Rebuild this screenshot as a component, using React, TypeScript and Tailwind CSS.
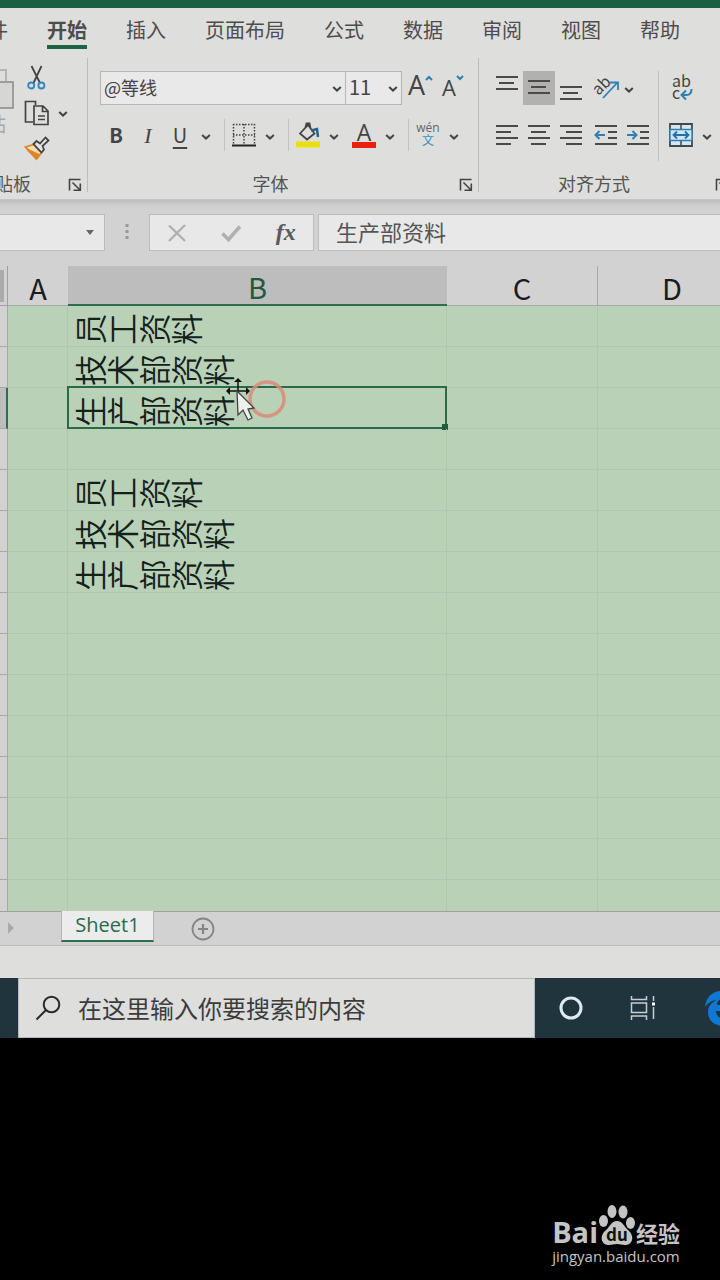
import type { ReactNode } from "react";

const TABS = ["文件", "开始", "插入", "页面布局", "公式", "数据", "审阅", "视图", "帮助"];

// Cell text of column B, one entry per visible row
const ROWS = [
  "员工资料",
  "技术部资料",
  "生产部资料",
  "",
  "员工资料",
  "技术部资料",
  "生产部资料",
  "",
  "",
  "",
  "",
  "",
  "",
  "",
];
const SELECTED_ROW = 2;

function Chevron() {
  return (
    <svg viewBox="0 0 10 8" className="h-2 w-2.5 shrink-0" fill="none" stroke="#444" strokeWidth="2">
      <path d="M1.2 2 5 5.6 8.8 2" />
    </svg>
  );
}

function DropArrow({ label }: { label: string }) {
  return (
    <button aria-label={label} className="flex h-[34px] w-5 shrink-0 items-center justify-center pt-1">
      <Chevron />
    </button>
  );
}

function Tool({ label, active, children }: { label: string; active?: boolean; children: ReactNode }) {
  return (
    <button
      aria-label={label}
      className={`flex h-[34px] w-8 shrink-0 items-center justify-center ${active ? "bg-[#b3b1b0]" : ""}`}
    >
      {children}
    </button>
  );
}

function Divider() {
  return <div className="mr-[3px] ml-2 h-8 w-px shrink-0 bg-[#c2c2c0]" />;
}

function GroupLabel({ children }: { children: ReactNode }) {
  return (
    <div className="mt-auto mb-1 flex h-6 items-center">
      <span className="flex-1 text-center text-[18px] leading-6 text-[#555]">{children}</span>
      <button aria-label={`${children}设置`} className="mx-1.5 mt-1 shrink-0">
        <svg viewBox="0 0 14 14" className="size-3.5" fill="none" stroke="#444" strokeWidth="1.6">
          <path d="M1.500 12.500V1.500H12.500M4.500 4.500l7 7M12.300 5.500v6.800H5.500" />
        </svg>
      </button>
    </div>
  );
}

// Horizontal strokes, each given as [x1, x2, y]
function Lines({ lines, children }: { lines: number[][]; children?: ReactNode }) {
  return (
    <svg viewBox="0 0 24 30" className="h-[30px] w-6" fill="none" stroke="#4a4a4a" strokeWidth="2">
      {lines.map(([a, b, y]) => (
        <path key={y} d={`M${a} ${y}H${b}`} />
      ))}
      {children}
    </svg>
  );
}

function Clipboard() {
  return (
    <section className="flex w-[142px] shrink-0 flex-col">
      <div className="flex">
        <button className="ml-5 flex w-10 shrink-0 flex-col items-end text-[20px] leading-6 text-[#a8a8a6]">
          <svg viewBox="0 0 48 46" className="-mr-2 mt-2.5 h-[46px] w-12" fill="none">
            <path d="M4 4h36v11" stroke="#b4b4b2" strokeWidth="2" />
            <rect x="20" y="16" width="27" height="26" fill="#d6d6d5" stroke="#8e8e8c" strokeWidth="1.6" />
          </svg>
          粘贴
        </button>
        <div className="ml-[15px] flex flex-col pt-1">
          <button aria-label="剪切" className="flex h-[35px] w-8 items-center justify-center">
            <svg viewBox="0 0 20 26" className="h-[26px] w-5" fill="none" strokeWidth="1.8">
              <path d="M4.500 1l8.500 17M14.500 1L6.500 18" stroke="#444" />
              <circle cx="4.200" cy="20.500" r="3" stroke="#2f86c0" />
              <circle cx="14.400" cy="20.500" r="3" stroke="#2f86c0" />
            </svg>
          </button>
          <div className="flex">
            <button aria-label="复制" className="flex h-[35px] w-8 items-center justify-center">
              <svg viewBox="0 0 26 26" className="size-[26px]" fill="none" stroke="#444" strokeWidth="1.7">
                <path d="M9 22H1.500V1.500H11.500V5M10 6h9l5 5V24.500H10zM18.500 6v5.500H24M14 16h7M14 19.500h7" />
              </svg>
            </button>
            <DropArrow label="复制选项" />
          </div>
          <button aria-label="格式刷" className="flex h-[35px] w-8 items-center justify-center">
            <svg viewBox="0 0 26 26" className="size-[26px]" fill="none" strokeWidth="1.8">
              <path d="M1.500 12L9.500 9.500l8 8L12.500 24z" fill="#f6dcb8" stroke="#dd8527" />
              <path d="M3.500 14.500l11 5-2.500 3.500z" fill="#dd8527" stroke="#dd8527" />
              <path d="M9.500 9l3-3 3.500 2.500L21.500 2.500l3 3-6 5.500 1.500 3.500-2.500 3z" stroke="#444" fill="#e4e4e2" />
            </svg>
          </button>
        </div>
      </div>
      <GroupLabel>剪贴板</GroupLabel>
    </section>
  );
}

function FontGroup() {
  return (
    <section className="flex w-[391px] shrink-0 flex-col">
      <div className="mt-[15px] flex pl-3">
        <label className="relative flex">
          <select
            aria-label="字体名称"
            className="h-[34px] w-[246px] appearance-none border border-[#b5b5b5] bg-[#e9e9e9] pb-0.5 pl-[3px] text-[18px] text-[#444]"
          >
            <option>@等线</option>
          </select>
          <span className="pointer-events-none absolute top-3.5 right-1">
            <Chevron />
          </span>
        </label>
        <label className="relative flex">
          <select
            aria-label="字号"
            className="h-[34px] w-14 appearance-none border border-l-0 border-[#b5b5b5] bg-[#e9e9e9] pb-0.5 pl-[3px] text-[20px] text-[#444]"
          >
            <option>11</option>
          </select>
          <span className="pointer-events-none absolute top-3.5 right-1">
            <Chevron />
          </span>
        </label>
        <button aria-label="增大字号" className="ml-1.5 flex h-[34px] w-[34px] items-start text-[#444]">
          <span className="font-['Open_Sans',sans-serif] text-[27px] leading-7">A</span>
          <svg viewBox="0 0 8 6" className="mt-1 h-1.5 w-2" fill="none" stroke="#2f7fb5" strokeWidth="2">
            <path d="M1 5l3-3 3 3" />
          </svg>
        </button>
        <button aria-label="减小字号" className="flex h-[34px] w-8 items-start text-[#444]">
          <span className="pt-0.5 font-['Open_Sans',sans-serif] text-[22px] leading-7">A</span>
          <svg viewBox="0 0 8 6" className="mt-1 h-1.5 w-2" fill="none" stroke="#2f7fb5" strokeWidth="2">
            <path d="M1 1l3 3 3-3" />
          </svg>
        </button>
      </div>
      <div className="mt-[13px] flex items-center pl-3 text-[20px] text-[#444]">
        <Tool label="加粗">
          <span className="font-bold">B</span>
        </Tool>
        <Tool label="倾斜">
          <span className="font-['Liberation_Serif',serif] text-[22px] italic">I</span>
        </Tool>
        <Tool label="下划线">
          <span className="underline underline-offset-4">U</span>
        </Tool>
        <DropArrow label="下划线选项" />
        <Divider />
        <Tool label="边框">
          <svg viewBox="0 0 24 24" className="size-6" fill="none" stroke="#444">
            <path d="M1 1.500H23M1 12H23M1.500 1V22M12 1V22M22.500 1V22" strokeWidth="1.500" strokeDasharray="1.500 1.500" />
            <path d="M0 22.500H24" stroke="#222" strokeWidth="2" />
          </svg>
        </Tool>
        <DropArrow label="边框选项" />
        <Divider />
        <Tool label="填充颜色">
          <svg viewBox="0 0 26 26" className="size-[26px]" fill="none">
            <path d="M5 11.500L13 3l6.500 8.500-7.500 6zM10.500 5.500l1-4h3l1 5" stroke="#444" strokeWidth="1.800" />
            <path d="M16 8.500l6-1.500 1 8" stroke="#24618f" strokeWidth="2.500" />
            <path d="M1 19.500h24v6H1z" fill="#ecdf10" />
          </svg>
        </Tool>
        <DropArrow label="填充颜色选项" />
        <div className="w-1" />
        <Tool label="字体颜色">
          <span className="flex flex-col items-center">
            <span className="font-['Open_Sans',sans-serif] text-[23px] leading-5">A</span>
            <span className="h-1.5 w-6 bg-[#e8200c]" />
          </span>
        </Tool>
        <DropArrow label="字体颜色选项" />
        <Divider />
        <Tool label="拼音指南">
          <span className="flex flex-col items-center pb-0.5">
            <span className="font-['Open_Sans',sans-serif] text-[12px] leading-3 text-[#666]">wén</span>
            <span className="text-[12px] leading-3 text-[#3b8fc4]">文</span>
          </span>
        </Tool>
        <DropArrow label="拼音选项" />
      </div>
      <GroupLabel>字体</GroupLabel>
    </section>
  );
}

function AlignGroup() {
  return (
    <section className="flex w-[256px] shrink-0 flex-col">
      <div className="mt-[15px] flex pl-3">
        <div>
          <div className="flex">
            <Tool label="顶端对齐">
              <Lines lines={[[1, 23, 4], [4, 19, 10], [1, 23, 16]]} />
            </Tool>
            <Tool label="垂直居中" active>
              <Lines lines={[[1, 23, 8], [4, 19, 14], [1, 23, 20]]} />
            </Tool>
            <Tool label="底端对齐">
              <Lines lines={[[1, 23, 14], [4, 19, 20], [1, 23, 26]]} />
            </Tool>
            <div className="w-1" />
            <Tool label="方向">
              <svg viewBox="0 0 26 26" className="size-[26px]" fill="none">
                <text x="0" y="18" fontSize="16" fill="#444" transform="rotate(-45 6 14)">
                  ab
                </text>
                <path d="M9 23L23 8M16 7.500H24V15" stroke="#2f7fb5" strokeWidth="1.800" />
              </svg>
            </Tool>
            <div className="-ml-1">
              <DropArrow label="方向选项" />
            </div>
          </div>
          <div className="mt-[13px] flex">
            <Tool label="左对齐">
              <Lines lines={[[1, 23, 6], [1, 16, 12], [1, 23, 18], [1, 16, 24]]} />
            </Tool>
            <Tool label="居中">
              <Lines lines={[[1, 23, 6], [4, 19, 12], [1, 23, 18], [4, 19, 24]]} />
            </Tool>
            <Tool label="右对齐">
              <Lines lines={[[1, 23, 6], [7, 23, 12], [1, 23, 18], [7, 23, 24]]} />
            </Tool>
            <div className="w-[3px]" />
            <Tool label="减少缩进量">
              <Lines lines={[[1, 23, 6], [14, 23, 12], [14, 23, 18], [1, 23, 24]]}>
                <path d="M11 15H2M5.500 11L1.500 15l4 4" stroke="#2f7fb5" />
              </Lines>
            </Tool>
            <Tool label="增加缩进量">
              <Lines lines={[[1, 23, 6], [14, 23, 12], [14, 23, 18], [1, 23, 24]]}>
                <path d="M1 15H10M6.500 11l4 4-4 4" stroke="#2f7fb5" />
              </Lines>
            </Tool>
          </div>
        </div>
        <div className="mr-1.5 ml-1 h-[90px] w-px bg-[#c2c2c0]" />
        <div>
          <Tool label="自动换行">
            <svg viewBox="0 0 26 28" className="h-7 w-[26px]" fill="none">
              <text x="4" y="13" fontSize="16" fill="#444">
                ab
              </text>
              <text x="4" y="25" fontSize="16" fill="#444">
                c
              </text>
              <path d="M23.500 15c0 4-2 6-5 6h-5M18 16.500L13.500 21l4.500 4.500" stroke="#2f7fb5" strokeWidth="2" />
            </svg>
          </Tool>
          <div className="mt-[13px] flex">
            <Tool label="合并后居中">
              <svg viewBox="0 0 24 24" className="size-6" fill="none">
                <path d="M1 1h22v22H1z" fill="#d8e6ee" stroke="#3f4a50" strokeWidth="1.800" />
                <path d="M1 6.500h22v11H1z" fill="#cfe6f5" stroke="#2f7fb5" strokeWidth="1.400" />
                <path d="M12 1v5M12 18v5" stroke="#3f4a50" strokeWidth="1.500" />
                <path d="M5 12h14M8 8.500L4.500 12 8 15.500M16 8.500l3.500 3.500-3.500 3.500" stroke="#2471a8" strokeWidth="1.800" />
              </svg>
            </Tool>
            <DropArrow label="合并选项" />
          </div>
        </div>
      </div>
      <GroupLabel>对齐方式</GroupLabel>
    </section>
  );
}

function Ribbon() {
  return (
    <div className="-ml-[54px] flex h-36 border-b border-[#c4c4c4]">
      <Clipboard />
      <div className="-ml-px mt-0.5 h-[134px] w-px shrink-0 bg-[#bcbcba]" />
      <FontGroup />
      <div className="-ml-px mt-0.5 h-[134px] w-px shrink-0 bg-[#bcbcba]" />
      <AlignGroup />
    </div>
  );
}

function FormulaBar() {
  return (
    <div className="-ml-[54px] flex h-[66px] items-start bg-linear-to-b from-[#bdbdbd] via-[#d2d2d2] via-10% to-[#d2d2d2] pt-3.5">
      <button
        aria-label="名称框"
        className="flex h-[37px] w-[159px] shrink-0 items-center justify-end border border-[#bcbcbc] bg-[#e8e8e8] pr-2.5"
      >
        <svg viewBox="0 0 8 5" className="h-[5px] w-2" fill="#666">
          <path d="M0 0h8L4 5z" />
        </svg>
      </button>
      <svg viewBox="0 0 4 16" className="mx-5 mt-2.5 h-4 w-1 shrink-0" fill="#999">
        <path d="M.5 0h3v3h-3zM.5 6h3v3h-3zM.5 12h3v3h-3z" />
      </svg>
      <div className="flex h-[37px] w-[165px] shrink-0 items-center justify-around border border-[#bcbcbc] bg-[#e8e8e8]">
        <button aria-label="取消">
          <svg viewBox="0 0 20 20" className="size-5" fill="none" stroke="#b0b0b0" strokeWidth="2.400">
            <path d="M2 2.500l16 15.500M18 2L2 18" />
          </svg>
        </button>
        <button aria-label="输入">
          <svg viewBox="0 0 20 20" className="size-5" fill="none" stroke="#b0b0b0" strokeWidth="3.600">
            <path d="M1.500 10.500l6 6L19 3.500" />
          </svg>
        </button>
        <button className="pb-0.5 font-['Liberation_Serif',serif] text-[24px] leading-6 font-bold text-[#5a5a5a] italic">
          fx
        </button>
      </div>
      <input
        aria-label="编辑栏"
        defaultValue="生产部资料"
        className="ml-1 h-[37px] min-w-0 flex-1 border border-r-0 border-[#bcbcbc] bg-[#e8e8e8] pb-1 pl-[17px] text-[22px] text-[#555]"
      />
    </div>
  );
}

function Pointer() {
  return (
    <svg viewBox="0 0 64 48" className="pointer-events-none absolute top-[72px] left-[224px] z-10 h-12 w-16" fill="none">
      <circle cx="43" cy="21" r="17" stroke="#d98b78" strokeWidth="3.500" opacity=".85" />
      <path d="M14 0l4 4h-8zM2 13l4-4v8zM26 13l-4-4v8z" fill="#111" />
      <path d="M14 3v11M5 13H23" stroke="#111" strokeWidth="1.500" />
      <path d="M13 13l1 24 5-5 5 10 4-2-4-9 6-1z" fill="#edf1ec" stroke="#444" strokeWidth="1.300" />
    </svg>
  );
}

function Sheet() {
  return (
    <div className="relative">
      <table className="w-full table-fixed border-separate border-spacing-0">
        <colgroup>
          <col className="w-2" />
          <col className="w-[60px]" />
          <col className="w-[379px]" />
          <col className="w-[151px]" />
          <col />
        </colgroup>
        <thead>
          <tr className="h-10 bg-[#d2d2d2] text-[29px] leading-8 text-[#1c1c1c]">
            <th aria-label="全选" className="border-r border-b border-[#9f9f9f] p-0">
              <div className="h-8 w-1 bg-[#ababab]" />
            </th>
            <th className="border-b border-[#a8a8a8] p-0 pt-0.5 font-normal">A</th>
            <th className="border-b-2 border-[#2d6e4e] bg-[#bdbdbd] p-0 pt-0.5 font-normal text-[#22593f]">B</th>
            <th className="border-r border-b border-[#a8a8a8] p-0 pt-0.5 font-normal">C</th>
            <th className="border-b border-[#a8a8a8] p-0 pt-0.5 pl-16 text-left font-normal">D</th>
          </tr>
        </thead>
        <tbody>
          {ROWS.map((text, i) => (
            <tr key={i} className="h-[41px]">
              <th
                aria-label={`第${i + 1}行`}
                className={
                  i === SELECTED_ROW
                    ? "border-r-2 border-b border-r-[#2d6e4e] border-b-[#a8a8a8] bg-[#bdbdbd] p-0"
                    : "border-r border-b border-[#a3aca3] bg-[#d2d2d2] p-0"
                }
              />
              <td className="border-r border-b border-[#b3c3b4] p-0" />
              <td className="relative border-r border-b border-[#b3c3b4] p-0 pt-1.5 pl-[7px]">
                {/* glyphs lie on their side while the line still runs left to right */}
                {text && (
                  <span className="block size-8 -rotate-90 text-[32px] leading-8 font-[350] whitespace-nowrap text-[#14201a] [writing-mode:vertical-rl]">
                    {text}
                  </span>
                )}
                {i === SELECTED_ROW && (
                  <span className="absolute -inset-x-px -top-0.5 -bottom-px border-2 border-[#2a6a49]">
                    <span className="absolute -right-[3px] -bottom-[3px] size-1.5 bg-[#1e5d3e]" />
                  </span>
                )}
              </td>
              <td className="border-r border-b border-[#b3c3b4] p-0" />
              <td className="border-b border-[#b3c3b4] p-0" />
            </tr>
          ))}
          <tr className="h-[31px]">
            <th aria-label="第15行" className="border-r border-[#a3aca3] bg-[#d2d2d2] p-0" />
            <td className="border-r border-[#b3c3b4] p-0" />
            <td className="border-r border-[#b3c3b4] p-0" />
            <td className="border-r border-[#b3c3b4] p-0" />
            <td className="p-0" />
          </tr>
        </tbody>
      </table>
      <div className="absolute inset-x-0 top-10">
        <Pointer />
      </div>
    </div>
  );
}

function SheetTabs() {
  return (
    <div className="flex h-[35px] items-start border-t border-b border-t-[#a0a0a0] border-b-[#bcbcbc] bg-[#d2d2d2]">
      <svg viewBox="0 0 6 12" className="mt-2.5 ml-2 h-3 w-1.5" fill="#aaa">
        <path d="M0 0l6 6-6 6z" />
      </svg>
      <button className="-mt-px ml-[47px] h-[31px] w-[93px] border-x border-b-2 border-x-[#b4b4b4] border-b-[#2d6e4e] bg-[#ececec] pb-0.5 font-['Open_Sans',sans-serif] text-[20px] leading-6 text-[#2a6a4a]">
        Sheet1
      </button>
      <button aria-label="新工作表" className="mt-[5px] ml-[37px]">
        <svg viewBox="0 0 24 24" className="size-6" fill="none" stroke="#858585" strokeWidth="1.800">
          <circle cx="12" cy="12" r="10.500" />
          <path d="M12 7v10M7 12h10" strokeWidth="2.200" />
        </svg>
      </button>
    </div>
  );
}

function Taskbar() {
  return (
    <div className="flex h-[60px] items-center overflow-hidden bg-[#20343e] pl-[18px]">
      <label className="flex h-[60px] w-[517px] shrink-0 items-center border border-[#b5b9bb] bg-[#dededd] pl-4">
        <svg viewBox="0 0 26 26" className="size-[26px] shrink-0" fill="none" stroke="#2a2a2a" strokeWidth="2">
          <circle cx="16.500" cy="9.500" r="7.800" />
          <path d="M11 15L1.500 24.500" />
        </svg>
        <input
          aria-label="搜索"
          placeholder="在这里输入你要搜索的内容"
          className="ml-[17px] min-w-0 flex-1 bg-transparent text-[24px] placeholder:text-[#3c3c3c]"
        />
      </label>
      <button aria-label="Cortana" className="ml-[23px] shrink-0">
        <svg viewBox="0 0 26 26" className="size-[26px]" fill="none" stroke="#dfeaf0" strokeWidth="3">
          <circle cx="13" cy="13" r="10" />
        </svg>
      </button>
      <button aria-label="任务视图" className="ml-[46px] shrink-0">
        <svg viewBox="0 0 26 26" className="size-[26px]" fill="none" stroke="#c5ced3" strokeWidth="1.500">
          <path d="M1.500 1v3.500h15V1M1.500 8h15v9.500h-15zM1.500 25v-4h15v4M23.500 1v5M23.500 12v12" />
          <path d="M22 7.500h3v3h-3z" fill="#fff" stroke="none" />
        </svg>
      </button>
      <button aria-label="Edge" className="ml-12 shrink-0">
        <svg viewBox="0 0 36 36" className="size-9" fill="#0f78d4">
          <path d="M1 17C2 7 9 1 18 1c10 0 16 7 16 16v4H12c0 5 4 8 9 8 4 0 8-1 11-3v7c-3 2-8 3-12 3C10 36 4 30 4 22c0-6 4-10 9-12-5 0-9 3-12 7zm12-2h12c0-4-2-6-6-6s-6 2-6 6z" />
        </svg>
      </button>
    </div>
  );
}

function Watermark() {
  return (
    <div className="mr-10 mb-3.5 flex flex-col text-[#c4c4c4]">
      <div className="flex items-end">
        <span className="font-['Open_Sans',sans-serif] text-[29px] leading-7 font-bold">Bai</span>
        <svg viewBox="0 0 38 42" className="h-[42px] w-[38px]" fill="#c4c4c4">
          <ellipse cx="5.500" cy="17" rx="4.500" ry="6" />
          <ellipse cx="14" cy="7.500" rx="4.500" ry="6.500" />
          <ellipse cx="25" cy="8" rx="4.500" ry="6.500" />
          <ellipse cx="32.500" cy="19" rx="4.500" ry="6" />
          <path d="M19 17c6 0 7 6 11 9 7 6 5 15-3 15-3 0-5-1-8-1s-5 1-8 1c-8 0-10-9-3-15 4-3 5-9 11-9z" />
          <text x="19" y="37" textAnchor="middle" fontSize="17" fontWeight="700" fill="#111">
            du
          </text>
        </svg>
        <span className="text-[22px] leading-7 font-bold">经验</span>
      </div>
      <span className="font-['Open_Sans',sans-serif] text-[15px] leading-5">jingyan.baidu.com</span>
    </div>
  );
}

export default function App() {
  return (
    <div className="flex min-h-screen flex-col overflow-hidden bg-black font-['Noto_Sans_CJK_SC',sans-serif]">
      <div className="h-2 bg-[#1b6141]" />
      <div className="bg-[#dededc]">
        <nav className="-ml-8 flex h-12 gap-[39px] overflow-hidden">
          {TABS.map((tab) => (
            <button
              key={tab}
              className={`flex shrink-0 flex-col items-center text-[20px] leading-6 text-[#4d4d4d] ${
                tab === "开始" ? "font-bold text-[#3c3c3c]" : ""
              }`}
            >
              <span className="mt-2.5">{tab}</span>
              {tab === "开始" && <span className="mt-[3px] h-1 w-full bg-[#1f6343]" />}
            </button>
          ))}
        </nav>
        <Ribbon />
      </div>
      <FormulaBar />
      <div className="bg-[#b9d1b7]">
        <Sheet />
      </div>
      <SheetTabs />
      <div className="h-8 bg-[#dededc]" />
      <Taskbar />
      <div className="flex flex-1 items-end justify-end bg-black">
        <Watermark />
      </div>
    </div>
  );
}
